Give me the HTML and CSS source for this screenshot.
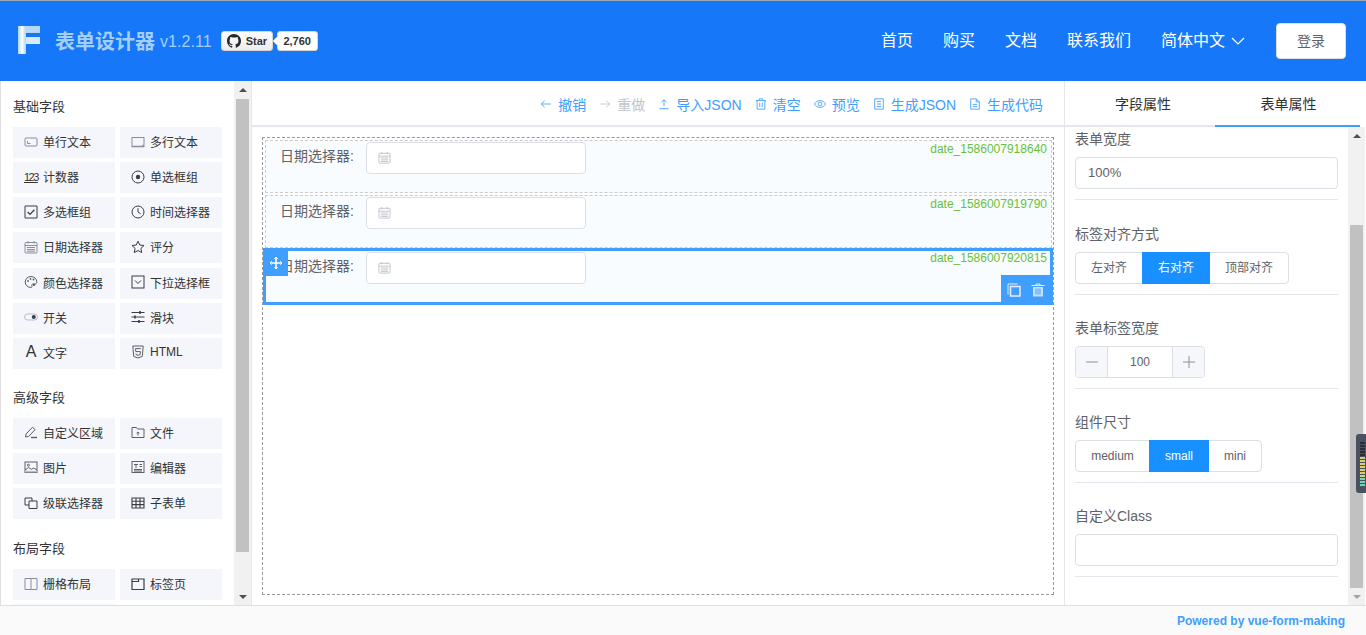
FILE: index.html
```html
<!DOCTYPE html>
<html lang="zh">
<head>
<meta charset="utf-8">
<title>表单设计器</title>
<link rel="stylesheet" href="styles.css">
</head>
<body>
<svg class="defs" aria-hidden="true">
  <symbol id="i-input" viewBox="0 0 14 14"><rect x="1" y="3" width="12" height="8" rx="1"/><path d="M3.5 6v2.5h3"/></symbol>
  <symbol id="i-area" viewBox="0 0 14 14"><rect x="1" y="2.5" width="12" height="9"/><path d="M1 11.5h12M11.5 10.5h1.5" stroke-width="1.5"/></symbol>
  <symbol id="i-radio" viewBox="0 0 14 14"><circle cx="7" cy="7" r="6"/><circle class="f" cx="7" cy="7" r="2.2"/></symbol>
  <symbol id="i-check" viewBox="0 0 14 14"><path d="M1 1h12v12H1z"/><path d="M3.6 7l2.4 2.4 4.4-4.6" stroke-width="1.3"/></symbol>
  <symbol id="i-clock" viewBox="0 0 14 14"><circle cx="7" cy="7" r="6"/><path d="M7 3.2V7l2.6 1.8"/></symbol>
  <symbol id="i-cal" viewBox="0 0 14 14"><rect x="1" y="2.5" width="12" height="10.500" rx=".8"/><path d="M4 1v2.500M10 1v2.500M1 5.500h12M3 7.500h8M3 9.500h8M3 11.200h8"/></symbol>
  <symbol id="i-star" viewBox="0 0 14 14"><path d="M7 1.2l1.8 3.8 4.2.5-3.1 2.9.8 4.2L7 10.5l-3.7 2.1.8-4.2L1 5.5l4.2-.5z"/></symbol>
  <symbol id="i-palette" viewBox="0 0 14 14"><path d="M7 1.5c-3.2 0-5.8 2.4-5.8 5.5s2.6 5.5 5.6 5.5c1.4 0 1.4-1 1-1.8-.4-.9.2-1.6 1.2-1.6h1.6c1.3 0 2.2-.9 2.2-2.2 0-3-2.7-5.4-5.8-5.4z"/><circle class="f" cx="4" cy="6" r=".9"/><circle class="f" cx="6.5" cy="4" r=".9"/><circle class="f" cx="9.5" cy="4.5" r=".9"/><circle class="f" cx="10" cy="9.8" r="1.2"/></symbol>
  <symbol id="i-select" viewBox="0 0 14 14"><rect x="1" y="1" width="12" height="12"/><path d="M4 5.5L7 8.5l3-3"/></symbol>
  <symbol id="i-switch" viewBox="0 0 14 14"><rect class="pale" x=".5" y="4" width="13" height="6" rx="3"/><circle class="f" cx="9.8" cy="7" r="2"/></symbol>
  <symbol id="i-slider" viewBox="0 0 14 14"><path d="M.5 2.5h13M.5 7h13M.5 11.5h13"/><path d="M9 1v3M4 5.5v3M8 10v3" stroke-width="1.6"/></symbol>
  <symbol id="i-html" viewBox="0 0 14 14"><path d="M1.8 1h10.4l-.9 10.4L7 13l-4.3-1.6z"/><path d="M9.8 3.6H4.5l.3 3h4.6l-.3 3L7 10.3l-2-.7-.1-1"/></symbol>
  <symbol id="i-pen" viewBox="0 0 14 14"><path d="M1.5 12l.6-3L8.500 2.200l2.600 2.400-6.400 6.800z"/><path d="M7 12.500h6" stroke-width="1.400"/></symbol>
  <symbol id="i-file" viewBox="0 0 14 14"><path d="M1 12.500V2.500h4.500l1 1.500H13v8.500z"/><path d="M7 10.500V7M5.700 8.200L7 7l1.300 1.200"/></symbol>
  <symbol id="i-img" viewBox="0 0 14 14"><rect x="1" y="2" width="12" height="10.500"/><circle cx="4.400" cy="5.200" r="1"/><path d="M1 10l3.500-2.500 3 1.800 2.300-1.300 3.200 2"/><path class="pale" d="M1 11.600h12" stroke-width="1.600"/></symbol>
  <symbol id="i-editor" viewBox="0 0 14 14"><rect x="1" y="1.500" width="12" height="11"/><path d="M3 4.500h4M5 4.500V8M8.500 4.500H11M8.500 6.500H11M3 9.500h8M3 11h8"/></symbol>
  <symbol id="i-cascade" viewBox="0 0 14 14"><path d="M5 9H1V2h7v3"/><path d="M5 5h8v7.500H5z"/></symbol>
  <symbol id="i-table" viewBox="0 0 14 14"><path d="M1 2h12v10H1zM1 5.300h12M1 8.600h12M5 2v10M9 2v10" stroke-width="1.100"/></symbol>
  <symbol id="i-grid" viewBox="0 0 14 14"><path d="M1 1.500h12v11H1zM7 1.500v11"/></symbol>
  <symbol id="i-tabs" viewBox="0 0 14 14"><path d="M1 2h12v10.500H1zM1 4.500h6.500V2" stroke-width="1.200"/></symbol>
  <symbol id="i-left" viewBox="0 0 14 14"><path d="M12.500 7H1.500M5.500 3l-4 4 4 4"/></symbol>
  <symbol id="i-right" viewBox="0 0 14 14"><path d="M1.500 7h11M8.500 3l4 4-4 4"/></symbol>
  <symbol id="i-upload" viewBox="0 0 14 14"><path d="M1.500 12.500h11M7 9.500V2M4 5l3-3 3 3"/></symbol>
  <symbol id="i-trash" viewBox="0 0 14 14"><path d="M1 3h12M5 3V1h4v2M2.500 3v10h9V3M5.500 5.500v5M8.500 5.500v5"/></symbol>
  <symbol id="i-eye" viewBox="0 0 14 14"><path d="M.5 7C2 4.400 4.300 3 7 3s5 1.400 6.500 4C12 9.600 9.700 11 7 11S2 9.600.5 7z"/><circle cx="7" cy="7" r="2.200"/></symbol>
  <symbol id="i-doc" viewBox="0 0 14 14"><path d="M2 1h10v12H2zM4.500 4h5M4.500 7h5M4.500 10h5"/></symbol>
  <symbol id="i-code" viewBox="0 0 14 14"><path d="M2 1h6.500L12 4.500V13H2zM8.500 1v3.500H12M4.500 7.500h5M4.500 10h5"/></symbol>
  <symbol id="i-copy" viewBox="0 0 14 14"><path d="M10.500 1H1v10.500" /><path d="M3.500 3.500H13V13H3.500z" stroke-width="1.500"/></symbol>
  <symbol id="i-trashfill" viewBox="0 0 14 14"><path d="M.5 2.500h13M5 2.500V1h4v1.500"/><path class="fp" d="M2 4h10v9.500H2z"/><path class="bluestroke" d="M5 5.500v6M7 5.500v6M9 5.500v6"/></symbol>
  <symbol id="i-move" viewBox="0 0 14 14"><path d="M7 1v12M1 7h12" stroke-width="1.600"/><path d="M5.300 2.800L7 1l1.700 1.800M5.300 11.200L7 13l1.700-1.800M2.800 5.300L1 7l1.800 1.700M11.200 5.300L13 7l-1.800 1.700"/></symbol>
  <symbol id="i-minus" viewBox="0 0 12 12"><path d="M0 6h12"/></symbol>
  <symbol id="i-plus" viewBox="0 0 12 12"><path d="M0 6h12M6 0v12"/></symbol>
</svg>

<header class="topbar">
  <div class="brand">
    <svg class="logo" viewBox="0 0 22 28" aria-hidden="true">
      <defs>
        <linearGradient id="lg" x1="0" y1="0" x2="1" y2="0">
          <stop offset="0" stop-color="#a9d3fb"/><stop offset=".5" stop-color="#ffffff"/><stop offset="1" stop-color="#a9d3fb"/>
        </linearGradient>
      </defs>
      <rect x="3" y="0" width="19" height="7" fill="#b5d8fc"/>
      <rect x="3" y="11" width="19" height="7" fill="#d8ebfe"/>
      <rect x="0" y="0" width="8" height="28" fill="url(#lg)"/>
    </svg>
    <span class="brand-name">表单设计器</span>
    <span class="brand-ver">v1.2.11</span>
    <span class="gh-star">
      <svg class="gh-mark" viewBox="0 0 16 16" aria-hidden="true"><path d="M8 0C3.580 0 0 3.580 0 8c0 3.540 2.290 6.530 5.470 7.590.4.070.55-.17.55-.38 0-.19-.01-.82-.01-1.490-2.010.37-2.530-.49-2.690-.94-.09-.23-.48-.94-.82-1.130-.28-.15-.68-.52-.01-.53.63-.01 1.080.58 1.230.82.72 1.210 1.870.87 2.330.66.07-.52.28-.87.51-1.070-1.780-.2-3.640-.89-3.640-3.950 0-.87.31-1.590.82-2.150-.08-.2-.36-1.020.08-2.120 0 0 .67-.21 2.200.82.64-.18 1.320-.27 2-.27.68 0 1.360.09 2 .27 1.530-1.040 2.200-.82 2.200-.82.44 1.100.16 1.920.08 2.120.51.56.82 1.270.82 2.150 0 3.070-1.870 3.750-3.650 3.950.29.25.54.73.54 1.480 0 1.070-.01 1.930-.01 2.200 0 .21.15.46.55.38A8.013 8.013 0 0016 8c0-4.420-3.580-8-8-8z"/></svg>
      Star
    </span>
    <span class="gh-count">2,760</span>
  </div>
  <nav class="nav">
    <a class="nav-link">首页</a>
    <a class="nav-link">购买</a>
    <a class="nav-link">文档</a>
    <a class="nav-link">联系我们</a>
    <a class="nav-link nav-lang">简体中文
      <svg class="chev" viewBox="0 0 14 8" aria-hidden="true"><path d="M1 1l6 6 6-6"/></svg>
    </a>
    <button class="login">登录</button>
  </nav>
</header>

<main class="workspace">
  <aside class="palette">
    <div class="palette-list">
      <section class="group group-first">
        <h3 class="group-title">基础字段</h3>
        <div class="widgets">
          <div class="widget"><svg class="ic c-soft"><use href="#i-input"/></svg>单行文本</div>
          <div class="widget"><svg class="ic c-soft"><use href="#i-area"/></svg>多行文本</div>
          <div class="widget"><span class="ic-num">123</span>计数器</div>
          <div class="widget"><svg class="ic c-dark"><use href="#i-radio"/></svg>单选框组</div>
          <div class="widget"><svg class="ic c-dark"><use href="#i-check"/></svg>多选框组</div>
          <div class="widget"><svg class="ic c-dark"><use href="#i-clock"/></svg>时间选择器</div>
          <div class="widget"><svg class="ic c-soft"><use href="#i-cal"/></svg>日期选择器</div>
          <div class="widget"><svg class="ic c-dark"><use href="#i-star"/></svg>评分</div>
          <div class="widget"><svg class="ic c-mid"><use href="#i-palette"/></svg>颜色选择器</div>
          <div class="widget"><svg class="ic c-dark"><use href="#i-select"/></svg>下拉选择框</div>
          <div class="widget"><svg class="ic c-dark"><use href="#i-switch"/></svg>开关</div>
          <div class="widget"><svg class="ic c-dark"><use href="#i-slider"/></svg>滑块</div>
          <div class="widget"><span class="ic-a">A</span>文字</div>
          <div class="widget"><svg class="ic c-mid"><use href="#i-html"/></svg>HTML</div>
        </div>
      </section>
      <section class="group">
        <h3 class="group-title">高级字段</h3>
        <div class="widgets">
          <div class="widget"><svg class="ic c-mid"><use href="#i-pen"/></svg>自定义区域</div>
          <div class="widget"><svg class="ic c-mid"><use href="#i-file"/></svg>文件</div>
          <div class="widget"><svg class="ic c-mid"><use href="#i-img"/></svg>图片</div>
          <div class="widget"><svg class="ic c-mid"><use href="#i-editor"/></svg>编辑器</div>
          <div class="widget"><svg class="ic c-dark"><use href="#i-cascade"/></svg>级联选择器</div>
          <div class="widget"><svg class="ic c-dark"><use href="#i-table"/></svg>子表单</div>
        </div>
      </section>
      <section class="group">
        <h3 class="group-title">布局字段</h3>
        <div class="widgets">
          <div class="widget"><svg class="ic c-soft"><use href="#i-grid"/></svg>栅格布局</div>
          <div class="widget"><svg class="ic c-dark"><use href="#i-tabs"/></svg>标签页</div>
          <div class="widget"></div>
        </div>
      </section>
    </div>
    <div class="scrollbar scrollbar-left">
      <span class="sb-btn"><i class="tri tri-up"></i></span>
      <span class="sb-thumb"></span>
      <span class="sb-fill"></span>
      <span class="sb-btn"><i class="tri tri-down"></i></span>
    </div>
  </aside>

  <section class="center">
    <div class="toolbar">
      <a class="tool"><svg class="ic"><use href="#i-left"/></svg>撤销</a>
      <a class="tool tool-off"><svg class="ic"><use href="#i-right"/></svg>重做</a>
      <a class="tool"><svg class="ic"><use href="#i-upload"/></svg>导入JSON</a>
      <a class="tool"><svg class="ic"><use href="#i-trash"/></svg>清空</a>
      <a class="tool"><svg class="ic"><use href="#i-eye"/></svg>预览</a>
      <a class="tool"><svg class="ic"><use href="#i-doc"/></svg>生成JSON</a>
      <a class="tool"><svg class="ic"><use href="#i-code"/></svg>生成代码</a>
    </div>
    <div class="canvas">
      <div class="dropzone">
        <div class="field">
          <label class="field-label">日期选择器:</label>
          <div class="date-input"><svg class="ic"><use href="#i-cal"/></svg></div>
          <span class="field-id">date_1586007918640</span>
        </div>
        <div class="field">
          <label class="field-label">日期选择器:</label>
          <div class="date-input"><svg class="ic"><use href="#i-cal"/></svg></div>
          <span class="field-id">date_1586007919790</span>
        </div>
        <div class="field field-active">
          <label class="field-label">日期选择器:</label>
          <div class="date-input"><svg class="ic"><use href="#i-cal"/></svg></div>
          <span class="field-id">date_1586007920815</span>
          <span class="drag-handle"><svg class="ic"><use href="#i-move"/></svg></span>
          <span class="field-actions">
            <svg class="ic"><use href="#i-copy"/></svg>
            <svg class="ic"><use href="#i-trashfill"/></svg>
          </span>
        </div>
      </div>
    </div>
  </section>

  <aside class="props">
    <div class="tabs">
      <div class="tab tab-a">字段属性</div>
      <div class="tab tab-on">表单属性</div>
    </div>
    <div class="props-body">
      <div class="props-list">
        <div class="prop">
          <div class="prop-label">表单宽度</div>
          <div class="text-input">100%</div>
        </div>
        <div class="prop">
          <div class="prop-label">标签对齐方式</div>
          <div class="seg">
            <span class="seg-item seg-w67">左对齐</span>
            <span class="seg-item seg-w68 seg-on">右对齐</span>
            <span class="seg-item seg-w79">顶部对齐</span>
          </div>
        </div>
        <div class="prop">
          <div class="prop-label">表单标签宽度</div>
          <div class="number">
            <span class="num-btn"><svg class="num-ic"><use href="#i-minus"/></svg></span>
            <span class="num-val">100</span>
            <span class="num-btn num-plus"><svg class="num-ic"><use href="#i-plus"/></svg></span>
          </div>
        </div>
        <div class="prop">
          <div class="prop-label">组件尺寸</div>
          <div class="seg">
            <span class="seg-item seg-w74">medium</span>
            <span class="seg-item seg-w60 seg-on">small</span>
            <span class="seg-item seg-w53">mini</span>
          </div>
        </div>
        <div class="prop">
          <div class="prop-label">自定义Class</div>
          <div class="text-input"></div>
        </div>
      </div>
      <div class="scrollbar scrollbar-right">
        <span class="sb-btn"><i class="tri tri-up"></i></span>
        <span class="sb-thumb"></span>
        <span class="sb-fill"></span>
        <span class="sb-btn"><i class="tri tri-down tri-soft"></i></span>
      </div>
    </div>
  </aside>
</main>

<footer class="footer">Powered by vue-form-making</footer>

<div class="meter" aria-hidden="true"><span class="meter-bars"></span></div>
</body>
</html>
```

FILE: styles.css
```css
* { box-sizing: border-box; }
html, body { margin: 0; height: 635px; overflow: hidden; }
body {
  display: flex;
  flex-direction: column;
  background: #fff;
  font-family: "Liberation Sans", "Noto Sans CJK SC", sans-serif;
  color: #606266;
}
.defs { display: none; }
.ic { width: 14px; height: 14px; flex: none; fill: none; stroke: currentColor; stroke-width: 1; overflow: visible; }
.f { fill: currentColor; stroke: none; }
.pale { stroke: #b9bdc9; }
.fp { fill: #c5e1ff; stroke: none; }
.bluestroke { stroke: #409eff; }

/* header */
.topbar {
  flex: none;
  height: 81px;
  display: flex;
  justify-content: space-between;
  align-items: center;
  padding: 0 20px 0 18px;
  background: #1677f9;
  border-top: 1px solid #9aa6b4;
}
.brand { display: flex; align-items: center; }
.logo { width: 22px; height: 28px; margin-top: -2px; }
.brand-name { margin-left: 15px; margin-top: -2px; font-size: 20px; font-weight: 700; color: #a3cffb; }
.brand-ver { margin-left: 5px; margin-top: 2px; font-size: 16px; color: #a3cffb; letter-spacing: .05px; }
.gh-star {
  margin-left: 9px;
  margin-top: -1px;
  width: 52px;
  height: 20px;
  display: flex;
  align-items: center;
  padding-left: 5px;
  border: 1px solid #d5d5d5;
  border-radius: 3px;
  background: linear-gradient(#fcfcfc, #eeeeee);
  font-size: 11px;
  font-weight: 700;
  color: #333;
}
.gh-mark { width: 14px; height: 14px; fill: #24292e; margin-right: 5px; flex: none; }
.gh-count {
  position: relative;
  margin-left: 4px;
  margin-top: -1px;
  width: 41px;
  height: 20px;
  line-height: 18px;
  text-align: center;
  border: 1px solid #d5d5d5;
  border-radius: 3px;
  background: #fff;
  font-size: 11px;
  font-weight: 700;
  color: #333;
}
.gh-count::before {
  content: "";
  position: absolute;
  left: -4px;
  top: 6px;
  width: 6px;
  height: 6px;
  background: #fff;
  transform: rotate(45deg);
}
.nav { display: flex; align-items: center; }
.nav-link { margin-right: 30px; font-size: 16px; line-height: 24px; color: #fff; display: flex; align-items: center; }
.nav-lang { margin-right: 31px; }
.chev { width: 14px; height: 8px; margin-left: 6px; fill: none; stroke: #fff; stroke-width: 1.2; }
.login {
  width: 70px;
  height: 36px;
  padding: 0 0 2px;
  border: 1px solid #dcdfe6;
  border-radius: 4px;
  background: #fff;
  font: inherit;
  font-size: 14px;
  color: #606266;
}

/* workspace */
.workspace { flex: 1; min-height: 0; display: flex; }

.palette {
  flex: none;
  width: 251px;
  display: flex;
  border-left: 1px solid #e0e0e0;
}
.palette-list { flex: 1; min-width: 0; overflow: hidden; padding: 6px 0 0 12px; }
.group { margin-bottom: 10px; }
.group-first { margin-bottom: 9px; }
.group-title { margin: 0; height: 40px; line-height: 40px; font-size: 13px; font-weight: 400; color: #333; }
.widgets {
  display: grid;
  grid-template-columns: 102px 102px;
  grid-auto-rows: 31px;
  column-gap: 5px;
  row-gap: 4.15px;
}
.widget {
  display: flex;
  align-items: center;
  gap: 5px;
  padding: 0 0 2px 11px;
  background: #f4f6fc;
  font-size: 12px;
  color: #333;
}
.c-soft { color: #8b8c9c; }
.c-mid { color: #5c5f66; }
.c-dark { color: #3a3d44; }
.ic-num { width: 14px; flex: none; font-size: 11px; letter-spacing: -1.5px; text-decoration: underline; color: #333; }
.ic-a { width: 14px; flex: none; font-size: 16px; line-height: 16px; text-align: center; color: #333; }

/* scrollbars */
.scrollbar { flex: none; width: 17px; display: flex; flex-direction: column; background: #f1f1f1; }
.sb-btn { flex: none; height: 17px; display: flex; align-items: center; justify-content: center; }
.sb-thumb { flex: none; margin: 0 2px; background: #c1c1c1; }
.sb-fill { flex: 1; }
.scrollbar-left .sb-thumb { margin-top: 1px; height: 453px; }
.scrollbar-right { margin-right: 1px; }
.scrollbar-right .sb-thumb { margin-top: 81px; height: 363px; }
.tri { width: 0; height: 0; border-left: 4px solid transparent; border-right: 4px solid transparent; }
.tri-up { border-bottom: 4px solid #505050; }
.tri-down { border-top: 4px solid #505050; }
.tri-soft { border-top-color: #a3a3a3; }

/* center */
.center { flex: 1; min-width: 0; display: flex; flex-direction: column; border-left: 1px solid #e4e7ed; }
.toolbar {
  flex: none;
  height: 46px;
  display: flex;
  justify-content: flex-end;
  align-items: center;
  padding: 1px 21px 0 0;
  gap: 13px;
  border-bottom: 2px solid #e4e7ed;
}
.tool { display: flex; align-items: center; gap: 6px; font-size: 14px; color: #409eff; }
.tool .ic { width: 12px; height: 12px; }
.tool-off { color: #c0c4cc; }
.canvas { flex: 1; min-height: 0; padding: 10px; }
.dropzone { height: 100%; border: 1px dashed #999; padding-top: 2px; }
.field {
  position: relative;
  display: flex;
  height: 53px;
  margin: 0 1px 2px 2px;
  padding-top: 1px;
  background: #f9fcff;
  border: 1px dashed #ccc;
}
.field-label { width: 100px; padding-right: 12px; text-align: right; font-size: 14px; line-height: 29px; height: 32px; color: #606266; }
.date-input {
  width: 220px;
  height: 32px;
  padding: 0 0 2px 11px;
  display: flex;
  align-items: center;
  background: #fff;
  border: 1px solid #dcdfe6;
  border-radius: 4px;
  color: #c0c4cc;
}
.date-input .ic { width: 13px; height: 13px; }
.field-id { position: absolute; top: 1px; right: 4px; font-size: 12px; line-height: 14px; color: #67c23a; }
.field-active { height: 57px; margin: -2px 0 0; padding-top: 1px; border: 3px solid #409eff; }
.field-active .field-id { right: 3px; top: 0; }
.drag-handle {
  position: absolute;
  left: -2px;
  top: -1px;
  width: 24px;
  height: 26px;
  display: flex;
  align-items: center;
  justify-content: center;
  background: #409eff;
  color: #fff;
}
.field-actions {
  position: absolute;
  right: -2px;
  bottom: -2px;
  width: 51px;
  height: 29px;
  display: flex;
  align-items: center;
  justify-content: center;
  gap: 10px;
  padding-right: 2px;
  background: #409eff;
  color: #e3f0ff;
}

/* props */
.props { flex: none; width: 302px; display: flex; flex-direction: column; border-left: 1px solid #e4e7ed; }
.tabs { flex: none; width: 295px; height: 46px; display: flex; border-bottom: 2px solid #e4e7ed; }
.tab { flex: 1; padding-left: 2px; text-align: center; font-size: 14px; line-height: 47px; color: #303133; height: 46px; }
.tab-a { flex: 0 0 150px; padding-left: 6px; }
.tab-on { border-bottom: 2px solid #409eff; }
.props-body { flex: 1; min-height: 0; display: flex; }
.props-list { flex: 1; min-width: 0; padding: 3.4px 10px 0; overflow: hidden; }
.prop { height: 70px; margin-bottom: 24.2px; border-bottom: 1px solid #e4e7ed; }
.prop-label { height: 27px; line-height: 19px; font-size: 14px; color: #606266; }
.text-input {
  height: 32px;
  padding-left: 12px;
  line-height: 30px;
  border: 1px solid #dcdfe6;
  border-radius: 4px;
  font-size: 13px;
  color: #606266;
  background: #fff;
}
.seg {
  display: inline-flex;
  height: 32px;
  border: 1px solid #dcdfe6;
  border-radius: 4px;
  font-size: 12px;
  line-height: 30px;
  color: #606266;
  vertical-align: top;
}
.seg-item { text-align: center; }
.seg-w67 { width: 66px; }
.seg-w68 { width: 68px; }
.seg-w79 { width: 78px; }
.seg-w74 { width: 73px; }
.seg-w60 { width: 60px; }
.seg-w53 { width: 52px; }
.seg-on { margin: -1px 0; height: 32px; line-height: 32px; background: #1890ff; color: #fff; }
.number {
  width: 130px;
  height: 32px;
  display: flex;
  border: 1px solid #dcdfe6;
  border-radius: 4px;
  font-size: 12px;
  line-height: 30px;
  text-align: center;
  color: #606266;
}
.num-btn { width: 32px; display: flex; align-items: center; justify-content: center; background: #f5f7fa; border-right: 1px solid #dcdfe6; border-radius: 3px 0 0 3px; }
.num-plus { border-right: 0; border-left: 1px solid #dcdfe6; border-radius: 0 3px 3px 0; }
.num-ic { width: 12px; height: 12px; fill: none; stroke: #8c8f96; stroke-width: 1; }
.num-val { flex: 1; }

/* footer */
.footer {
  flex: none;
  height: 30px;
  padding-right: 21px;
  text-align: right;
  line-height: 30px;
  background: #fafafa;
  border-top: 1px solid #e0e0e0;
  font-size: 12px;
  font-weight: 700;
  color: #409eff;
}

/* docked system widget over the page edge */
.meter {
  position: absolute;
  left: 1356px;
  top: 434px;
  width: 10px;
  height: 59px;
  padding: 7px 0 7px 4px;
  background: #4a5160;
  border-radius: 3px 0 0 3px;
}
.meter-bars {
  display: block;
  width: 5px;
  height: 100%;
  background:
    repeating-linear-gradient(#4a5160 0 1px, transparent 1px 3px),
    linear-gradient(#2a2e36 0 35%, #d8cf72 35% 80%, #6fd6b8 80%);
}
```
